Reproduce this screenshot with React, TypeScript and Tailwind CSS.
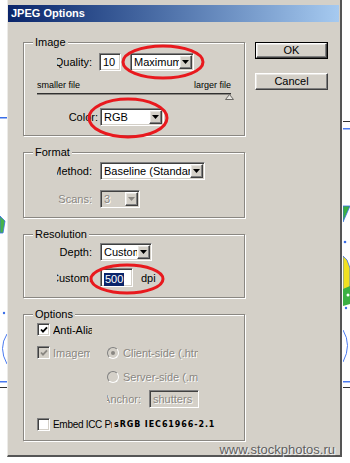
import React from 'react';

const sunken =
  'border border-t-[#808080] border-l-[#808080] border-b-white border-r-white shadow-[inset_1px_1px_0_#404040,inset_-1px_-1px_0_#d4d0c8]';
const raised =
  'border border-t-white border-l-white border-r-[#404040] border-b-[#404040] shadow-[inset_-1px_-1px_0_#808080,inset_1px_1px_0_#e8e6e2]';
const group = 'relative border border-[#8a8782] shadow-[inset_1px_1px_0_#fff,1px_1px_0_#fff]';
const dim = 'text-[#8a8782] [text-shadow:1px_1px_0_#fff]';

const Arrow = ({ disabled }: { disabled?: boolean }) => (
  <div className={`w-[13px] h-full shrink-0 bg-[#d4d0c8] flex items-center justify-center ${raised}`}>
    <svg width="7" height="4" viewBox="0 0 7 4">
      <path d="M0 0h7L3.5 4z" fill={disabled ? '#8a8782' : '#000'} />
    </svg>
  </div>
);

const Select = ({ value, className, disabled }: { value: string; className: string; disabled?: boolean }) => (
  <div className={`h-[18px] p-[1px] flex ${sunken} ${disabled ? 'bg-[#d4d0c8]' : 'bg-white'} ${className}`}>
    <div className={`flex-1 min-w-0 overflow-hidden whitespace-nowrap pl-[2px] leading-[14px] ${disabled ? dim : ''}`}>{value}</div>
    <Arrow disabled={disabled} />
  </div>
);

// right-aligned label that gets clipped on its left side, like the original dialog
const Label = ({ children, className, disabled }: { children: React.ReactNode; className: string; disabled?: boolean }) => (
  <div className={`overflow-hidden flex justify-end whitespace-nowrap leading-[14px] ${className}`}>
    <span className={`shrink-0 ${disabled ? dim : ''}`}>{children}</span>
  </div>
);

const Check = ({ checked, disabled }: { checked?: boolean; disabled?: boolean }) => (
  <div className={`w-[13px] h-[13px] shrink-0 flex items-center justify-center ${sunken} ${disabled ? 'bg-[#d4d0c8]' : 'bg-white'}`}>
    {checked && (
      <svg width="8" height="8" viewBox="0 0 8 8">
        <polyline points="1,3.5 3,5.7 7,1.3" fill="none" stroke={disabled ? '#8a8782' : '#000'} strokeWidth="1.8" />
      </svg>
    )}
  </div>
);

const Radio = ({ checked }: { checked?: boolean }) => (
  <div className="w-[12px] h-[12px] shrink-0 rounded-full border border-t-[#808080] border-l-[#808080] border-r-white border-b-white bg-[#d4d0c8] flex items-center justify-center">
    {checked && <div className="w-[4px] h-[4px] rounded-full bg-[#8a8782]" />}
  </div>
);

const GroupTitle = ({ children }: { children: React.ReactNode }) => (
  <span className="absolute -top-[8px] left-[9px] px-[2px] bg-[#d4d0c8] leading-[14px]">{children}</span>
);

export default function App() {
  return (
    <div className="w-[350px] h-[463px] bg-white relative overflow-hidden font-['Liberation_Sans',Arial,sans-serif] text-[11px] text-black">
      {/* background artwork peeking out beside the dialog */}
      <svg className="absolute left-0 top-0" width="7" height="463" viewBox="0 0 7 463">
        <rect x="0" y="117" width="7" height="1.5" fill="#3a6ee8" />
        <path d="M0 216 L5 221 L3 233 L0 233 Z" fill="#46b34a" stroke="#3a6ee8" strokeWidth="0.8" />
        <circle cx="4" cy="313" r="1.2" fill="#3a6ee8" />
        <path d="M7 334 Q-2 348 7 364" fill="none" stroke="#4a7af0" strokeWidth="1" />
        <rect x="0" y="381" width="7" height="1.5" fill="#4a7af0" />
        <rect x="0" y="387" width="7" height="1" fill="#333" />
      </svg>
      <svg className="absolute left-[343px] top-0" width="7" height="463" viewBox="0 0 7 463">
        <rect x="0" y="121" width="7" height="1" fill="#333" />
        <rect x="0" y="128" width="7" height="1.5" fill="#4a7af0" />
        <path d="M0 206 L7 206 L0 222 Z" fill="#3cb043" stroke="#3a6ee8" strokeWidth="0.8" />
        <circle cx="2" cy="242" r="1.3" fill="#3a6ee8" />
        <path d="M0 256 L4 260 L7 268 L7 288 L0 290 Z" fill="#f0e020" stroke="#3a6ee8" strokeWidth="0.8" />
        <path d="M0 289 L7 286 L7 304 L0 306 Z" fill="#3cb043" />
        <circle cx="5" cy="295" r="1.5" fill="#fff" />
        <circle cx="3" cy="308" r="1.2" fill="#3a6ee8" />
        <path d="M0 330 Q9 345 0 362" fill="none" stroke="#4a7af0" strokeWidth="1" />
        <rect x="0" y="381" width="7" height="1.5" fill="#4a7af0" />
        <rect x="0" y="387" width="7" height="1" fill="#333" />
      </svg>

      <div className="ml-[7px] w-[335px] h-[457px] bg-[#d4d0c8] border-l border-l-[#ecebe8] border-r-2 border-r-[#555] border-b-2 border-b-[#555] pt-[5px] flex flex-col">
        {/* Title bar */}
        <div className="h-[17px] mr-[1px] bg-gradient-to-r from-[#0a246a] to-[#a6caf0] flex items-center pl-[3px]">
          <span className="text-white font-bold leading-[17px]">JPEG Options</span>
        </div>

        <div className="flex">
          {/* Left column: groups */}
          <div className="ml-[15px] mt-[20px] w-[222px] flex flex-col">
            {/* Image */}
            <div className={`${group} h-[94px] flex flex-col`}>
              <GroupTitle>Image</GroupTitle>
              <div className="mt-[10px] h-[18px] flex items-center">
                <Label className="ml-[33px] w-[35px]">Quality:</Label>
                <div className={`ml-[7px] w-[22px] h-[18px] bg-white pl-[3px] leading-[16px] ${sunken}`}>10</div>
                <Select value="Maximum" className="ml-[9px] w-[64px]" />
              </div>
              <div className="mt-[9px] ml-[13px] w-[194px] h-[10px] flex justify-between text-[9px] leading-[10px]">
                <span>smaller file</span>
                <span>larger file</span>
              </div>
              <div className="mt-[2px] ml-[13px] w-[194px] h-[7px] relative">
                <div className="mt-[1px] border-t border-t-[#303030] border-b border-b-[#8a8782]" />
                <svg className="absolute right-[-3px] top-[2px]" width="9" height="6" viewBox="0 0 9 6">
                  <path d="M4.5 0.5 L8.5 5.5 L0.5 5.5 Z" fill="#e8e6e2" stroke="#6a6864" strokeWidth="1" />
                </svg>
              </div>
              <div className="mt-[9px] h-[18px] flex items-center">
                <Label className="ml-[33px] w-[41px]">Color:</Label>
                <Select value="RGB" className="ml-[2px] w-[64px]" />
              </div>
            </div>

            {/* Format */}
            <div className={`${group} mt-[16px] h-[66px] flex flex-col`}>
              <GroupTitle>Format</GroupTitle>
              <div className="mt-[9px] h-[18px] flex items-center">
                <Label className="ml-[33px] w-[35px]">Method:</Label>
                <Select value="Baseline (Standard)" className="ml-[8px] w-[105px]" />
              </div>
              <div className="mt-[10px] h-[18px] flex items-center">
                <Label className="ml-[33px] w-[35px]" disabled>Scans:</Label>
                <Select value="3" className="ml-[8px] w-[40px]" disabled />
              </div>
            </div>

            {/* Resolution */}
            <div className={`${group} mt-[16px] h-[64px] flex flex-col`}>
              <GroupTitle>Resolution</GroupTitle>
              <div className="mt-[8px] h-[18px] flex items-center">
                <Label className="ml-[33px] w-[35px]">Depth:</Label>
                <Select value="Custom" className="ml-[8px] w-[52px]" />
              </div>
              <div className="mt-[7px] h-[19px] flex items-center">
                <Label className="ml-[33px] w-[35px]">Custom:</Label>
                <div className={`ml-[8px] w-[33px] h-[19px] bg-white pl-[3px] pt-[2px] ${sunken}`}>
                  <span className="bg-[#0a246a] text-white leading-[13px] inline-block px-[1px]">500</span>
                </div>
                <span className="ml-[8px] leading-[14px]">dpi</span>
              </div>
            </div>

            {/* Options */}
            <div className={`${group} mt-[16px] h-[127px] flex flex-col`}>
              <GroupTitle>Options</GroupTitle>
              <div className="mt-[8px] h-[13px] flex items-center">
                <div className="ml-[13px]"><Check checked /></div>
                <div className="ml-[3px] w-[39px] overflow-hidden whitespace-nowrap leading-[14px]">Anti-Alias</div>
              </div>
              <div className="mt-[10px] h-[13px] flex items-center">
                <div className="ml-[13px]"><Check checked disabled /></div>
                <div className={`ml-[3px] w-[37px] overflow-hidden whitespace-nowrap leading-[14px] ${dim}`}>Imagemap</div>
                <div className="ml-[17px]"><Radio checked /></div>
                <div className={`ml-[4px] w-[75px] overflow-hidden whitespace-nowrap leading-[14px] ${dim}`}>Client-side (.html)</div>
              </div>
              <div className="mt-[11px] h-[13px] flex items-center">
                <div className="ml-[83px]"><Radio /></div>
                <div className={`ml-[4px] w-[75px] overflow-hidden whitespace-nowrap leading-[14px] ${dim}`}>Server-side (.map)</div>
              </div>
              <div className="mt-[7px] h-[18px] flex items-center">
                <Label className="ml-[83px] w-[34px]" disabled>Anchor:</Label>
                <div className={`ml-[8px] w-[50px] h-[18px] bg-[#d4d0c8] pl-[3px] leading-[16px] overflow-hidden whitespace-nowrap ${sunken}`}>
                  <span className={dim}>shutters</span>
                </div>
              </div>
              <div className="mt-[10px] h-[13px] flex items-center">
                <div className="ml-[13px]"><Check /></div>
                <div className="ml-[3px] w-[59px] overflow-hidden whitespace-nowrap leading-[14px] text-[10px] tracking-[-0.3px] font-['Liberation_Sans_Narrow','Liberation_Sans',sans-serif]">Embed ICC Profile</div>
                <span className="ml-[2px] text-[8px] font-bold tracking-[0.9px] font-['DejaVu_Sans',sans-serif] leading-[10px]">sRGB IEC61966-2.1</span>
              </div>
            </div>
          </div>

          {/* Right column: buttons */}
          <div className="ml-[10px] mt-[20px] w-[73px] flex flex-col">
            <div className="h-[17px] border border-black">
              <div className={`h-full flex items-center justify-center bg-[#d4d0c8] ${raised}`}>OK</div>
            </div>
            <div className={`mt-[14px] h-[17px] flex items-center justify-center bg-[#d4d0c8] ${raised}`}>Cancel</div>
          </div>
        </div>
      </div>

      {/* red highlight marks drawn over the screenshot */}
      <svg className="absolute inset-0 pointer-events-none" width="350" height="463" viewBox="0 0 350 463">
        <ellipse cx="163" cy="62" rx="40" ry="16" fill="none" stroke="#e8191e" strokeWidth="3" />
        <ellipse cx="128" cy="118" rx="39" ry="19" fill="none" stroke="#e8191e" strokeWidth="3" />
        <ellipse cx="127" cy="279" rx="36" ry="14" fill="none" stroke="#e8191e" strokeWidth="3" />
      </svg>

      {/* watermark */}
      <span className="absolute right-[15px] top-[442px] text-[13px] leading-[16px] text-[#5e5e5e] [text-shadow:1px_1px_1px_#fff]">www.stockphotos.ru</span>
    </div>
  );
}
